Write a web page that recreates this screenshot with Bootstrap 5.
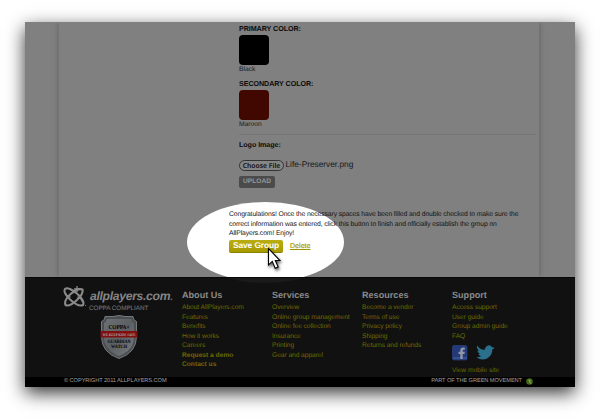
<!DOCTYPE html>
<html lang="en">
<head>
<meta charset="utf-8">
<meta name="viewport" content="width=device-width, initial-scale=1">
<title>AllPlayers.com</title>
<link href="https://cdn.jsdelivr.net/npm/bootstrap@5.3.0/dist/css/bootstrap.min.css" rel="stylesheet">
<style>
body{width:600px;height:420px;padding:22px 25px 33px;background:#fff;overflow:hidden;font:7px/9.5px "Liberation Sans",Arial,sans-serif;color:#181818;text-rendering:geometricPrecision}
.window{width:550px;height:365px;background:#808080;box-shadow:0 6px 17px rgba(0,0,0,.8);white-space:nowrap}
.stage{height:255px;padding:0 36px 0 34px}
.sheet{height:255px;width:480px;padding-left:170px;box-shadow:-3px 0 4px -1px #6e6e6e,3px 0 4px -1px #6e6e6e}
.fields{padding:2px 3px 0 10px;height:185px}
.caption{font-size:7.15px;font-weight:700;line-height:10px;height:11px;letter-spacing:-.06px;color:#0c0c0c}
.swatch{width:30px;height:30px;border-radius:4px}
.black{background:#000}.maroon{background:#400800}
.swatch-name{line-height:10px;height:14px;font-size:6.7px}
.rule{height:1px;background:#757575}
.logo-caption{margin-top:5px}
.file-row{height:12px;margin-top:8px}
.choose{width:45px;height:11px;line-height:9px;border:1px solid #333;border-radius:6px;font-family:"Noto Sans",sans-serif;font-size:6.8px;font-weight:600;color:#101010;background:#858585}
.file-name{font-size:8.3px;margin-left:1.5px}
.upload{width:36px;height:12px;border-radius:2px;background:#4b4b4b;color:#979797;font-size:6.6px;font-weight:700;margin-top:5px}
.spot{left:162px;top:180px;width:157px;height:80px;border-radius:50%;background:#fff}
.spot-foot{left:162px;top:-75px;width:157px;height:80px;border-radius:50%;background:#1b1b1b;clip-path:inset(75px 0 0 0)}
.note{margin:3px 0 0;font-size:6.8px;letter-spacing:-.112px;color:#141414}
.actions{margin-top:1px}
.save{width:54px;height:13px;border-radius:2px;background:linear-gradient(#b9ad12,#a69a00);border-bottom:1px solid #8b8000;color:#fff;font-size:8.4px;font-weight:700;letter-spacing:-.08px}
.delete{margin-left:7px;padding-top:1px;color:#a09500;font-size:7.1px;-webkit-text-stroke:.15px #a09500}
.cursor{left:242px;top:225px;filter:drop-shadow(1px 2px 1.5px rgba(0,0,0,.65))}
.foot{height:100px;background:#111;border-top:1px solid #080808}
.brand-col{width:157px;padding:8px 0 0 38px}
.logo-name{font-size:12.2px;line-height:14px;font-weight:700;font-style:italic;color:#858585;letter-spacing:-.32px;margin-top:3px}
.coppa{font-size:6.3px;line-height:8px;color:#6a6a6a;letter-spacing:-.03px;margin:-3px 0 2px 26px;-webkit-text-stroke:.15px #6a6a6a}
.shield{display:block;margin-left:37px}
.link-col{width:90px;padding-top:12px}
.link-col h2{font-size:9.1px;line-height:11px;font-weight:700;color:#8a8a8a;margin:0 0 2px}
.link-col a{display:block;color:#706900;text-decoration:none;font-size:6.7px;letter-spacing:-.07px;height:9.5px}
.link-col .fw-bold{letter-spacing:-.02px}
.social{height:25px;padding-top:4px}
.legal{height:10px;background:#000;color:#a0a0a0;font-size:5.7px;letter-spacing:-.09px;line-height:9px;padding:0 42px 0 39px}
</style>
<script src="https://cdn.jsdelivr.net/npm/bootstrap@5.3.0/dist/js/bootstrap.bundle.min.js"></script>
</head>
<body>
<div class="window position-relative">
  <main class="stage overflow-hidden">
    <div class="spot position-absolute"></div>
    <div class="sheet">
      <div class="fields position-relative">
        <div class="caption">PRIMARY COLOR:</div>
        <div class="swatch black"></div>
        <div class="swatch-name">Black</div>
        <div class="caption">SECONDARY COLOR:</div>
        <div class="swatch maroon"></div>
        <div class="swatch-name">Maroon</div>
        <div class="rule"></div>
        <div class="caption logo-caption">Logo Image:</div>
        <div class="file-row d-flex align-items-center"><span class="choose text-center">Choose File</span><span class="file-name">Life-Preserver.png</span></div>
        <div class="upload d-flex align-items-center justify-content-center">UPLOAD</div>
      </div>
      <p class="note position-relative">Congratulations! Once the necessary spaces have been filled and double checked to make sure the<br>correct information was entered, click this button to finish and officially establish the group on<br>AllPlayers.com! Enjoy!</p>
      <div class="actions d-flex align-items-center position-relative"><span class="save d-flex align-items-center justify-content-center">Save Group</span><a class="delete text-decoration-underline" href="#">Delete</a></div>
    </div>
    <svg class="cursor position-absolute z-1" width="14" height="24" viewBox="0 0 14 24"><path d="M1.500 1.500v16.500l3.800-3.600 2.900 6.900 3-1.300-2.900-6.500h4.700z" fill="#fff" stroke="#000" stroke-width="1.100"/></svg>
  </main>
  <footer class="position-relative">
    <div class="foot d-flex position-relative">
      <div class="spot-foot position-absolute"></div>
      <div class="brand-col">
        <div class="d-flex">
          <svg width="27" height="22" viewBox="0 0 27 22" fill="none" stroke="#8a8a8a"><path d="M2 3C6-1 23 13 20 19 14 22-1 8 2 3Z" stroke-width="2.100" stroke-linejoin="round"/><path d="M2.500 19C0 13 13 1 19.500 3.500c1.500 6-12 18-17 15.500Z" stroke-width="2.100" stroke-linejoin="round"/><path d="M2.500 7q1 4 5 4M14.500 11q4 1 5 5" stroke-width="1.500"/><path d="M14 0v6M11 3h6" stroke-width="1.300"/><circle cx="22.500" cy="19.500" r=".6" fill="#858585" stroke="none"/></svg>
          <span class="logo-name">allplayers.com<span class="fw-normal">.</span></span>
        </div>
        <div class="coppa">COPPA COMPLIANT</div>
        <svg class="shield overflow-visible" width="38" height="45" viewBox="0 0 38 45">
          <defs><linearGradient id="steel" x2="1" y2="1"><stop stop-color="#6b7074"/><stop offset=".5" stop-color="#5c6063"/><stop offset="1" stop-color="#777b7e"/></linearGradient></defs>
          <path d="M5 1.500h8q6-2 12 0h8q0 4 3.500 5v15q0 16-17.500 22Q1.500 37.500 1.500 21.500v-15Q5 5.500 5 1.500Z" fill="#4a4e51" stroke="#74797c"/>
          <path d="M7 4h24q1 3 3 4v14q0 13-15 19Q4 35 4 22V8q2-1 3-4Z" fill="url(#steel)"/>
          <text x="19" y="14" text-anchor="middle" textLength="21" lengthAdjust="spacingAndGlyphs" font-family="Liberation Serif,serif" font-size="6.200" font-weight="700" fill="#000">COPPA+</text>
          <path d="M.5 16h37v6.500H.5z" fill="#801010"/>
          <text x="19" y="20.700" text-anchor="middle" textLength="33" lengthAdjust="spacingAndGlyphs" font-family="Liberation Serif,serif" font-size="3.800" font-weight="700" fill="#aaa">WE KEEP KIDS SAFE</text>
          <text x="19" y="27.500" text-anchor="middle" textLength="23" lengthAdjust="spacingAndGlyphs" font-family="Liberation Serif,serif" font-size="4.800" font-weight="700" fill="#000">GUARDIAN</text>
          <text x="19" y="32.500" text-anchor="middle" textLength="16" lengthAdjust="spacingAndGlyphs" font-family="Liberation Serif,serif" font-size="4.800" font-weight="700" fill="#000">WATCH</text>
        </svg>
      </div>
      <nav class="link-col"><h2>About Us</h2><a href="#">About AllPlayers.com</a><a href="#">Features</a><a href="#">Benefits</a><a href="#">How it works</a><a href="#">Careers</a><a href="#" class="fw-bold">Request a demo</a><a href="#" class="fw-bold">Contact us</a></nav>
      <nav class="link-col"><h2>Services</h2><a href="#">Overview</a><a href="#">Online group management</a><a href="#">Online fee collection</a><a href="#">Insurance</a><a href="#">Printing</a><a href="#">Gear and apparel</a></nav>
      <nav class="link-col"><h2>Resources</h2><a href="#">Become a vendor</a><a href="#">Terms of use</a><a href="#">Privacy policy</a><a href="#">Shipping</a><a href="#">Returns and refunds</a></nav>
      <nav class="link-col"><h2>Support</h2><a href="#">Access support</a><a href="#">User guide</a><a href="#">Group admin guide</a><a href="#">FAQ</a>
        <div class="social d-flex">
          <svg width="24" height="16" viewBox="0 0 24 16"><rect x=".5" y=".5" width="14.500" height="14.500" rx="1.500" fill="#23397a" stroke="#30478a" stroke-width=".6"/><path d="M1 12h14v2H1z" fill="#35508f"/><path d="M8.300 14V9H6.500V6.700h1.800V5.300q0-2.800 2.800-2.800h1.700v2.300h-1.100q-1 0-1 1v.9h2.100L12.500 9h-1.800v5z" fill="#8f96a8"/></svg>
          <svg width="19" height="16" viewBox="0 0 19 16"><path d="M1 .5C3.500 4 6 4.500 8.500 5c.5-3 3-5.500 5.500-4.500.8.200 1.500 1 1.800 1.500L18.700 3l-2.400 1.500C16.500 10 12 14.500 7 14.500c-2.500 0-4.500-.8-6.500-2.500 2 .3 3.500-.2 4.500-1C3.500 10.800 2.800 10 2.500 9l1.500-.2C2.500 8 1.500 7 1.500 5.500L3 5.800C1.500 4.500.5 2.500 1 .5Z" fill="#2a6f8c"/></svg>
        </div><a href="#">View mobile site</a></nav>
    </div>
    <div class="legal d-flex justify-content-between"><span>© COPYRIGHT 2011 ALLPLAYERS.COM</span><span class="d-flex">PART OF THE GREEN MOVEMENT<svg class="ms-1" width="7" height="9" viewBox="0 0 7 9"><circle cx="3.500" cy="4.500" r="3.300" fill="#426713"/><path d="M2 3q2-1 3 0L4 5q2 0 1 2Q3 6 3 4.500Z" fill="#829c51"/></svg></span></div>
  </footer>
</div>
</body>
</html>
